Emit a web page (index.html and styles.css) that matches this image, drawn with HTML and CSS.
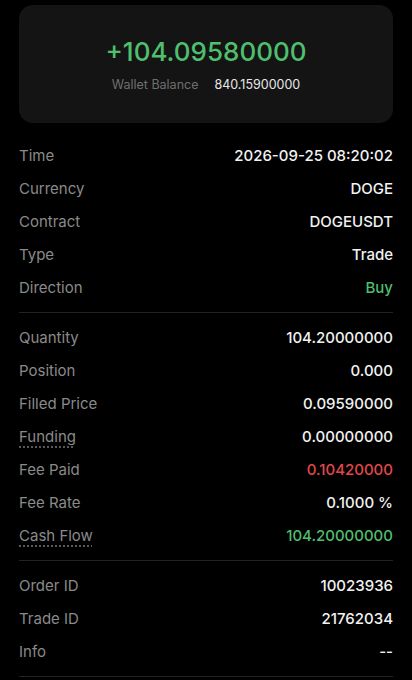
FILE: index.html
```html
<!DOCTYPE html>
<html>
<head>
  <title>Transaction Detail</title>
  <link rel="stylesheet" href="styles.css">
</head>
<body>
  <div class="summary-card">
    <div class="pnl">+104.09580000</div>
    <div class="balance">
      <span class="balance-label">Wallet Balance</span>
      <span class="balance-value">840.15900000</span>
    </div>
  </div>

  <div class="section">
    <div class="row"><span class="label">Time</span><span class="value">2026-09-25 08:20:02</span></div>
    <div class="row"><span class="label">Currency</span><span class="value">DOGE</span></div>
    <div class="row"><span class="label">Contract</span><span class="value">DOGEUSDT</span></div>
    <div class="row"><span class="label">Type</span><span class="value">Trade</span></div>
    <div class="row"><span class="label">Direction</span><span class="value green">Buy</span></div>
  </div>

  <div class="section">
    <div class="row"><span class="label">Quantity</span><span class="value">104.20000000</span></div>
    <div class="row"><span class="label">Position</span><span class="value">0.000</span></div>
    <div class="row"><span class="label">Filled Price</span><span class="value">0.09590000</span></div>
    <div class="row"><span class="label dotted">Funding</span><span class="value">0.00000000</span></div>
    <div class="row"><span class="label">Fee Paid</span><span class="value red">0.10420000</span></div>
    <div class="row"><span class="label">Fee Rate</span><span class="value">0.1000 %</span></div>
    <div class="row"><span class="label dotted">Cash Flow</span><span class="value green">104.20000000</span></div>
  </div>

  <div class="section">
    <div class="row"><span class="label">Order ID</span><span class="value">10023936</span></div>
    <div class="row"><span class="label">Trade ID</span><span class="value">21762034</span></div>
    <div class="row"><span class="label">Info</span><span class="value">--</span></div>
  </div>
</body>
</html>
```

FILE: styles.css
```css
body {
  font-family: Inter, "Noto Sans", sans-serif;
  background-color: #000;
  color: #fff;
  margin: 0;
  padding: 5px 19px 0 19px;
}

.summary-card {
  background-color: #141414;
  border-radius: 14px;
  height: 118px;
  display: flex;
  flex-direction: column;
  align-items: center;
  justify-content: center;
  margin-bottom: 8px;
}

.pnl {
  color: #4fbf6e;
  font-size: 26px;
  font-weight: 500;
  line-height: 32px;
  margin-top: 2px;
}

.balance {
  display: flex;
  gap: 16px;
  font-size: 12.5px;
  line-height: 18px;
  margin-top: 8px;
}

.balance-label {
  color: #6f6f6f;
}

.balance-value {
  color: #e8e8e8;
}

.section {
  border-bottom: 1px solid #222;
  padding: 8px 0;
}

.row {
  display: flex;
  justify-content: space-between;
  align-items: center;
  height: 33px;
  font-size: 15px;
}

.label {
  color: #8a8a8a;
}

.label.dotted {
  text-decoration: underline dotted #777;
  text-underline-offset: 5px;
}

.value {
  color: #f2f2f2;
  font-weight: 500;
}

.value.green {
  color: #4fbf6e;
}

.value.red {
  color: #e0484a;
}
```
